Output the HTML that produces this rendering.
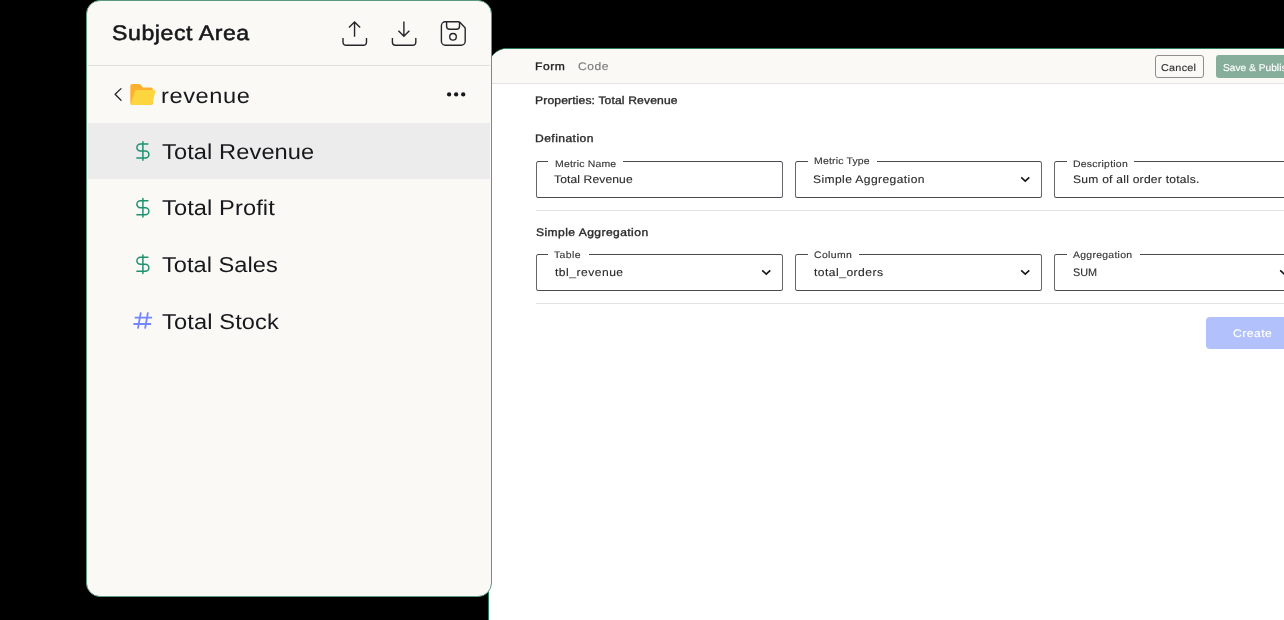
<!DOCTYPE html>
<html>
<head>
<meta charset="utf-8">
<title>Subject Area</title>
<style>
html,body{margin:0;padding:0;}
body{width:1284px;height:620px;background:#000;overflow:hidden;position:relative;font-family:"Liberation Sans",sans-serif;}
.t{position:absolute;white-space:pre;line-height:1;transform-origin:0 0;text-rendering:geometricPrecision;font-family:"Liberation Sans",sans-serif;}
#right{position:absolute;left:488px;top:48px;width:900px;height:640px;background:#fff;border:1px solid #2a7a5c;border-radius:19px 0 0 0;overflow:hidden;box-sizing:content-box;}
#right .hdr{position:absolute;left:0;top:0;width:900px;height:34px;background:#faf9f5;border-bottom:1px solid #e3e3e1;box-sizing:content-box;}
#left{position:absolute;left:86px;top:0;width:404px;height:595px;background:#faf9f5;border:1px solid #5c9980;border-radius:14px;overflow:hidden;box-sizing:content-box;}
#left .div{position:absolute;left:1px;top:64px;width:402px;height:1px;background:#dfe1df;}
#left .sel{position:absolute;left:1px;top:122px;width:402px;height:56px;background:#ececec;}
.tl{position:absolute;left:0;top:0;width:100%;height:100%;will-change:transform;}
.fs{position:absolute;border:1px solid #4a4b4e;border-left-color:#66676a;border-right-color:#66676a;border-radius:2.5px;box-sizing:border-box;width:247px;height:37px;}
.gap{position:absolute;height:3px;background:#fff;}
.hr{position:absolute;left:47px;width:860px;height:1px;background:#e2e2e2;}
.btn{position:absolute;box-sizing:border-box;border-radius:3px;}
svg{position:absolute;overflow:visible;}
</style>
</head>
<body>

<div id="right">
  <div class="hdr"></div>
  <!-- buttons -->
  <div class="btn" style="left:666px;top:6px;width:49px;height:23px;border:1px solid #8d8d8d;background:#faf9f5;"></div>
  <div class="btn" style="left:727px;top:6px;width:90px;height:23px;background:#87ae9b;"></div>
  <div class="btn" style="left:717px;top:268px;width:95px;height:32px;background:#b2c0fb;border-radius:4px;"></div>

  <!-- dividers -->
  <div class="hr" style="top:161px;"></div>
  <div class="hr" style="top:254px;"></div>

  <!-- fieldsets row 1 -->
  <div class="fs" style="left:47px;top:112px;"></div>
  <div class="gap" style="left:59px;top:111px;width:75px;"></div>
  <div class="fs" style="left:306px;top:112px;"></div>
  <div class="gap" style="left:319px;top:111px;width:69px;"></div>
  <div class="fs" style="left:565px;top:112px;"></div>
  <div class="gap" style="left:578px;top:111px;width:67px;"></div>
  <!-- fieldsets row 2 -->
  <div class="fs" style="left:47px;top:205px;"></div>
  <div class="gap" style="left:59px;top:204px;width:41px;"></div>
  <div class="fs" style="left:306px;top:205px;"></div>
  <div class="gap" style="left:319px;top:204px;width:51px;"></div>
  <div class="fs" style="left:565px;top:205px;"></div>
  <div class="gap" style="left:578px;top:204px;width:73px;"></div>

  <!-- select chevrons -->
  <svg style="left:-489px;top:-49px;" width="1400" height="620" viewBox="0 0 1400 620"><path d="M1021.20 177.30 L1025.25 181.10 L1029.30 177.30 M762.20 270.40 L766.25 274.20 L770.30 270.40 M1021.20 270.40 L1025.25 274.20 L1029.30 270.40 M1280.20 270.40 L1284.25 274.20 L1288.30 270.40" fill="none" stroke="#15161a" stroke-width="1.6" stroke-linecap="butt" stroke-linejoin="miter"/></svg>

<div class="tl">
<span class="t" style="left:45.70px;top:13.00px;font-size:11px;letter-spacing:0.494px;color:#222;transform:scaleX(1.1);-webkit-text-stroke:0.35px #222;">Form</span>
<span class="t" style="left:89.04px;top:13.00px;font-size:11px;letter-spacing:0.477px;color:#7a7a7a;transform:scaleX(1.1);-webkit-text-stroke:0.12px #7a7a7a;">Code</span>
<span class="t" style="left:672.27px;top:15.00px;font-size:9.9px;letter-spacing:0.217px;color:#333;transform:scaleX(1.1);-webkit-text-stroke:0.15px #333;">Cancel</span>
<span class="t" style="left:733.80px;top:15.00px;font-size:9.9px;letter-spacing:0.0px;color:#fff;transform:scaleX(1.0328);-webkit-text-stroke:0.15px #fff;">Save &amp; Publish</span>
<span class="t" style="left:45.70px;top:47.00px;font-size:11px;letter-spacing:0.133px;color:#2b2b2b;transform:scaleX(1.1);-webkit-text-stroke:0.35px #2b2b2b;">Properties: Total Revenue</span>
<span class="t" style="left:45.70px;top:85.00px;font-size:11px;letter-spacing:0.4px;color:#2b2b2b;transform:scaleX(1.1);-webkit-text-stroke:0.35px #2b2b2b;">Defination</span>
<span class="t" style="left:65.84px;top:111.00px;font-size:9.5px;letter-spacing:0.178px;color:#333;transform:scaleX(1.1);-webkit-text-stroke:0.12px #333;">Metric Name</span>
<span class="t" style="left:65.14px;top:126.00px;font-size:11px;letter-spacing:0.1px;color:#2b2b2b;transform:scaleX(1.1);-webkit-text-stroke:0.12px #2b2b2b;">Total Revenue</span>
<span class="t" style="left:324.75px;top:108.00px;font-size:9.5px;letter-spacing:0.167px;color:#333;transform:scaleX(1.1);-webkit-text-stroke:0.12px #333;">Metric Type</span>
<span class="t" style="left:324.20px;top:126.00px;font-size:11px;letter-spacing:0.35px;color:#2b2b2b;transform:scaleX(1.1);-webkit-text-stroke:0.12px #2b2b2b;">Simple Aggregation</span>
<span class="t" style="left:584.02px;top:111.00px;font-size:9.5px;letter-spacing:0.224px;color:#333;transform:scaleX(1.1);-webkit-text-stroke:0.12px #333;">Description</span>
<span class="t" style="left:583.50px;top:126.00px;font-size:11px;letter-spacing:0.207px;color:#2b2b2b;transform:scaleX(1.1);-webkit-text-stroke:0.12px #2b2b2b;">Sum of all order totals.</span>
<span class="t" style="left:46.68px;top:179.00px;font-size:11px;letter-spacing:0.384px;color:#2b2b2b;transform:scaleX(1.1);-webkit-text-stroke:0.35px #2b2b2b;">Simple Aggregation</span>
<span class="t" style="left:65.23px;top:202.00px;font-size:9.5px;letter-spacing:0.359px;color:#333;transform:scaleX(1.1);-webkit-text-stroke:0.12px #333;">Table</span>
<span class="t" style="left:65.78px;top:219.00px;font-size:11px;letter-spacing:0.442px;color:#2b2b2b;transform:scaleX(1.1);-webkit-text-stroke:0.12px #2b2b2b;">tbl_revenue</span>
<span class="t" style="left:325.28px;top:202.00px;font-size:9.5px;letter-spacing:0.315px;color:#333;transform:scaleX(1.1);-webkit-text-stroke:0.12px #333;">Column</span>
<span class="t" style="left:324.68px;top:219.00px;font-size:11px;letter-spacing:0.425px;color:#2b2b2b;transform:scaleX(1.1);-webkit-text-stroke:0.12px #2b2b2b;">total_orders</span>
<span class="t" style="left:584.37px;top:202.00px;font-size:9.5px;letter-spacing:0.249px;color:#333;transform:scaleX(1.1);-webkit-text-stroke:0.12px #333;">Aggregation</span>
<span class="t" style="left:584.41px;top:219.00px;font-size:11px;letter-spacing:0.0px;color:#2b2b2b;transform:scaleX(0.9872);-webkit-text-stroke:0.12px #2b2b2b;">SUM</span>
<span class="t" style="left:743.88px;top:280.00px;font-size:11px;letter-spacing:0.456px;color:#fff;transform:scaleX(1.1);-webkit-text-stroke:0.15px #fff;">Create</span>
</div>
</div>

<div id="left">
  <div class="div"></div>
  <div class="sel"></div>

  <!-- header icons: coordinates in page px, shifted by panel origin (87,1) -->
  <svg style="left:-87px;top:-1px;" width="1284" height="620" viewBox="0 0 1284 620" fill="none" stroke="#25262a" stroke-width="1.4" stroke-linecap="butt" stroke-linejoin="miter">
    <!-- upload -->
    <path d="M343 37.9 V42.3 a3 3 0 0 0 3 3 H363.5 a3 3 0 0 0 3 -3 V37.9"/>
    <path d="M354.55 36.8 V22 M348.95 27.5 L354.55 21.9 L360.15 27.5"/>
    <!-- download -->
    <path d="M392.4 37.9 V42.3 a3 3 0 0 0 3 3 H412.8 a3 3 0 0 0 3 -3 V37.9"/>
    <path d="M403.9 21.5 V36 M398.45 30.7 L403.9 36.15 L409.35 30.7"/>
    <!-- save -->
    <path d="M445.4 21.75 H458.4 a2 2 0 0 1 1.4 0.6 L464.6 27.15 a2 2 0 0 1 0.6 1.4 V41.3 a4 4 0 0 1 -4 4 H445.4 a4 4 0 0 1 -4 -4 V25.75 a4 4 0 0 1 4 -4 Z"/>
    <path d="M446.6 21.75 V26.2 a3 3 0 0 0 3 3 H456.5 a3 3 0 0 0 3 -3 V22.3"/>
    <circle cx="453" cy="36.8" r="3.3"/>
    <!-- back chevron -->
    <path d="M121 88.6 L115.1 94.3 L121 100.2" stroke-width="1.3" stroke-linecap="round" stroke-linejoin="round"/>
  </svg>

  <!-- folder, dots, row icons -->
  <svg style="left:-87px;top:-1px;" width="1284" height="620" viewBox="0 0 1284 620">
    <!-- folder back -->
    <path d="M132.3 84 H138.9 a2 2 0 0 1 1.4 0.6 L143 87.6 H150.9 a2 2 0 0 1 2 2 V103 a2 2 0 0 1 -2 2 H132.3 a2 2 0 0 1 -2 -2 V86 a2 2 0 0 1 2 -2 Z" fill="#ffb02e"/>
    <!-- folder front -->
    <path d="M136.6 90 H153.9 a1.4 1.4 0 0 1 1.35 1.75 L152.3 103.6 a1.9 1.9 0 0 1 -1.85 1.4 H132.4 a1.4 1.4 0 0 1 -1.35 -1.75 L134.7 91.4 a1.9 1.9 0 0 1 1.9 -1.4 Z" fill="#fcd53f"/>
    <!-- dots -->
    <circle cx="449.1" cy="94.4" r="2.15" fill="#17181c"/>
    <circle cx="456.15" cy="94.4" r="2.15" fill="#17181c"/>
    <circle cx="463.2" cy="94.4" r="2.15" fill="#17181c"/>
    <!-- dollar icons -->
    <g fill="none" stroke="#1f9270" stroke-width="1.5" stroke-linecap="round" stroke-linejoin="round">
      <g transform="translate(130.9,139.1)"><path d="M12 2.75 V21.25 M17 5 H9.5 a3.5 3.5 0 0 0 0 7 h5 a3.5 3.5 0 0 1 0 7 H6"/></g>
      <g transform="translate(130.9,195.7)"><path d="M12 2.75 V21.25 M17 5 H9.5 a3.5 3.5 0 0 0 0 7 h5 a3.5 3.5 0 0 1 0 7 H6"/></g>
      <g transform="translate(130.9,252.2)"><path d="M12 2.75 V21.25 M17 5 H9.5 a3.5 3.5 0 0 0 0 7 h5 a3.5 3.5 0 0 1 0 7 H6"/></g>
    </g>
    <!-- hash -->
    <g fill="none" stroke="#7385ff" stroke-width="1.8" stroke-linecap="butt">
      <path d="M134.7 317.7 H152.1 M133.4 324 H151.1 M140.8 312.3 L137.9 328.7 M147.9 312.3 L145.1 328.7"/>
    </g>
  </svg>

<div class="tl">
<span class="t" style="left:25.12px;top:22.00px;font-size:21px;letter-spacing:0.51px;color:#17181c;transform:scaleX(1.1);-webkit-text-stroke:0.55px #17181c;">Subject Area</span>
<span class="t" style="left:73.72px;top:85.00px;font-size:21.5px;letter-spacing:0.51px;color:#17181c;transform:scaleX(1.1);">revenue</span>
<span class="t" style="left:74.60px;top:141.00px;font-size:21.5px;letter-spacing:0.08px;color:#17181c;transform:scaleX(1.1);">Total Revenue</span>
<span class="t" style="left:74.60px;top:197.00px;font-size:21.5px;letter-spacing:0.083px;color:#17181c;transform:scaleX(1.1);">Total Profit</span>
<span class="t" style="left:74.61px;top:254.00px;font-size:21.5px;letter-spacing:0.005px;color:#17181c;transform:scaleX(1.1);">Total Sales</span>
<span class="t" style="left:74.60px;top:311.00px;font-size:21.5px;letter-spacing:0.108px;color:#17181c;transform:scaleX(1.1);">Total Stock</span>
</div>
</div>

</body>
</html>
